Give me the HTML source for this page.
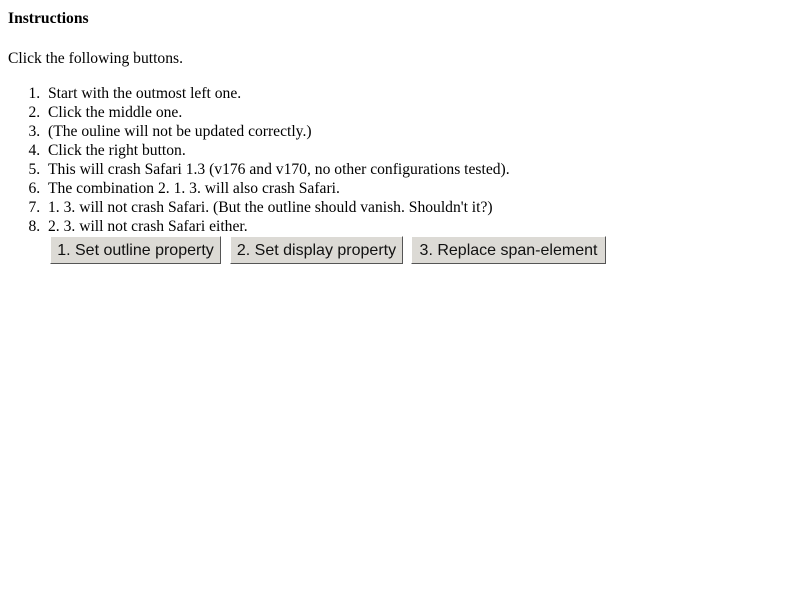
<!DOCTYPE html>
<html><head><style>
body{margin:0;background:#fff;font-family:"Liberation Serif",serif;font-size:15.6px;color:#000}
h4{position:absolute;left:8px;top:10px;margin:0;font-size:15.6px;line-height:18px}
p{position:absolute;left:8px;top:50px;margin:0;line-height:18px}
ol{position:absolute;left:0;top:84px;margin:0;padding-left:48px;line-height:19px}
li{padding-left:0}
li::marker{content:counter(list-item) ".  "}
.b{position:absolute;top:236px;height:28px;box-sizing:border-box;background:#dcdad5;border:1px solid;border-color:#fff #555 #555 #fff;font-family:"Liberation Sans",sans-serif;font-size:16px;line-height:28px;text-align:center;color:#111;white-space:nowrap}
</style></head><body>
<h4>Instructions</h4>
<p>Click the following buttons.</p>
<ol>
<li>Start with the outmost left one.</li>
<li>Click the middle one.</li>
<li>(The ouline will not be updated correctly.)</li>
<li>Click the right button.</li>
<li>This will crash Safari 1.3 (v176 and v170, no other configurations tested).</li>
<li>The combination 2. 1. 3. will also crash Safari.</li>
<li>1. 3. will not crash Safari. (But the outline should vanish. Shouldn't it?)</li>
<li>2. 3. will not crash Safari either.</li>
</ol>
<div class="b" style="left:50px;width:171px">1. Set outline property</div>
<div class="b" style="left:230px;width:173px">2. Set display property</div>
<div class="b" style="left:411px;width:195px">3. Replace span-element</div>
</body></html>
